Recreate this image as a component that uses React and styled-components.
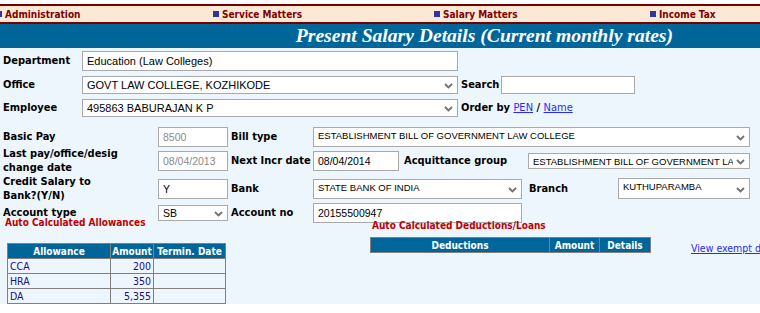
import styled, { createGlobalStyle } from "styled-components";

const GlobalStyle = createGlobalStyle`
  html, body {
    margin: 0;
    padding: 0;
    background: #ffffff;
    width: 760px;
    height: 313px;
    overflow: hidden;
  }
`;

const Page = styled.div`
  width: 760px;
  padding-top: 4px;
  font-family: "DejaVu Sans Condensed", "DejaVu Sans", sans-serif;
`;

const NavBar = styled.div`
  display: grid;
  grid-template-columns: 217px 221px 216px 1fr;
  height: 16px;
  margin-left: -4px;
  background: #fbe9d6;
  border-top: 2px solid #7a0000;
  border-bottom: 2px solid #7a0000;
  align-items: center;
`;

const NavItem = styled.a`
  display: flex;
  align-items: center;
  gap: 3px;
  color: #800000;
  font-size: 10px;
  font-weight: bold;
  text-decoration: none;
  white-space: nowrap;

  &::before {
    content: "";
    width: 6px;
    height: 6px;
    background: #333399;
  }
`;

const Banner = styled.div`
  display: flex;
  justify-content: flex-end;
  align-items: center;
  height: 24px;
  padding-right: 87px;
  background: #00669a;
`;

const Title = styled.h1`
  margin: 0;
  color: #ffffff;
  font-family: "Liberation Serif", serif;
  font-style: italic;
  font-weight: bold;
  font-size: 19.6px;
  line-height: 24px;
`;

const Content = styled.div`
  background: #eef6fd;
  height: 253px;
  padding: 3px 0 0 3px;
`;

const TopGrid = styled.div`
  display: grid;
  grid-template-columns: 76px 376px auto;
  column-gap: 3px;
  row-gap: 5px;
  align-items: center;
`;

const Label = styled.span`
  color: #000000;
  font-size: 11px;
  font-weight: bold;
  line-height: 14px;
  white-space: nowrap;
  flex-shrink: 0;
`;

const fontFor = (kind) => {
  if (kind === "caps") return `font-family: "Liberation Sans", Arial, sans-serif; font-size: 9.5px;`;
  if (kind === "text") return `font-family: "Liberation Sans", Arial, sans-serif; font-size: 11px;`;
  return `font-family: "Liberation Sans", Arial, sans-serif; font-size: 10.5px;`;
};

const Input = styled.div`
  box-sizing: border-box;
  display: flex;
  align-items: center;
  width: ${({ w }) => w}px;
  height: ${({ h }) => h || 20}px;
  padding: 0 4px;
  background: #ffffff;
  border: 1px solid #a9a9a9;
  color: ${({ dim }) => (dim ? "#8a8a8a" : "#000000")};
  ${({ kind }) => fontFor(kind)}
  white-space: nowrap;
  overflow: hidden;
  flex-shrink: 0;
`;

const SelectBox = styled(Input)`
  position: relative;
  padding-right: 16px;
  align-items: ${({ top }) => (top ? "flex-start" : "center")};
  padding-top: ${({ top }) => (top ? "2px" : "0")};
`;

const SelectText = styled.span`
  flex: 1;
  overflow: hidden;
`;

const Chevron = styled.svg`
  position: absolute;
  right: 4px;
  top: 50%;
  margin-top: -2px;
`;

function Select({ children, ...rest }) {
  return (
    <SelectBox {...rest}>
      <SelectText>{children}</SelectText>
      <Chevron width="9" height="6" viewBox="0 0 9 6">
        <path d="M1 1 L4.5 4.5 L8 1" stroke="#707070" strokeWidth="1.8" fill="none" />
      </Chevron>
    </SelectBox>
  );
}

const Inline = styled.div`
  display: flex;
  align-items: center;
  gap: 2px;
`;

const Link = styled.a`
  color: #2a2aff;
  text-decoration: underline;
  font-weight: normal;
`;

const Form = styled.div`
  margin-top: 9px;
  display: flex;
  flex-direction: column;
`;

const FormRow = styled.div`
  display: flex;
  align-items: center;
  height: ${({ h }) => h}px;
`;

const LeftLabel = styled(Label)`
  width: 155px;
  white-space: normal;
`;

const MidLabel = styled(Label)`
  box-sizing: border-box;
  width: ${({ w }) => w || 85}px;
  padding-left: ${({ pl }) => pl || 3}px;
`;

const Sections = styled.div`
  display: flex;
  align-items: flex-start;
  margin-top: -6px;
`;

const Column = styled.div`
  display: flex;
  flex-direction: column;
  align-items: flex-start;
  width: ${({ w }) => w}px;
  flex-shrink: 0;
`;

const SectionTitle = styled.div`
  color: #c00000;
  font-size: 10px;
  font-weight: bold;
  line-height: 13px;
  margin-top: ${({ mt }) => mt || 0}px;
  margin-left: 2px;
`;

const Table = styled.table`
  border-collapse: collapse;
  table-layout: fixed;
  width: ${({ w }) => w}px;
  margin-top: ${({ mt }) => mt}px;
  margin-left: ${({ ml }) => ml || 0}px;
  font-size: 10px;
`;

const Th = styled.th`
  background: #00669a;
  color: #ffffff;
  font-weight: bold;
  height: 14px;
  padding: 0 1px;
  border: 1px solid #808080;
  width: ${({ w }) => w}px;
  line-height: 13px;
  white-space: nowrap;
  overflow: hidden;
`;

const Td = styled.td`
  color: #1c0d8a;
  font-size: 10.5px;
  height: 14px;
  padding: 0 2px;
  border: 1px solid #808080;
  text-align: ${({ right }) => (right ? "right" : "left")};
  line-height: 13px;
`;

const ViewLink = styled.a`
  color: #2a2aff;
  text-decoration: underline;
  font-size: 10.5px;
  white-space: nowrap;
  margin-top: 26px;
`;

const allowances = [
  { name: "CCA", amount: "200" },
  { name: "HRA", amount: "350" },
  { name: "DA", amount: "5,355" },
];

export default function App() {
  return (
    <Page>
      <GlobalStyle />
      <NavBar>
        <NavItem>Administration</NavItem>
        <NavItem>Service Matters</NavItem>
        <NavItem>Salary Matters</NavItem>
        <NavItem>Income Tax</NavItem>
      </NavBar>
      <Banner>
        <Title>Present Salary Details (Current monthly rates)</Title>
      </Banner>
      <Content>
        <TopGrid>
          <Label>Department</Label>
          <Input w={376} h={20} kind="text">Education (Law Colleges)</Input>
          <span />
          <Label>Office</Label>
          <Select w={376} h={18} kind="text">GOVT LAW COLLEGE, KOZHIKODE</Select>
          <Inline>
            <Label>Search</Label>
            <Input w={134} h={18} />
          </Inline>
          <Label>Employee</Label>
          <Select w={376} h={18} kind="text">495863 BABURAJAN K P</Select>
          <Label>
            Order by <Link>PEN</Link> / <Link>Name</Link>
          </Label>
        </TopGrid>

        <Form>
          <FormRow h={22}>
            <LeftLabel>Basic Pay</LeftLabel>
            <Input w={70} dim>8500</Input>
            <MidLabel>Bill type</MidLabel>
            <Select w={437} kind="caps" top>
              ESTABLISHMENT BILL OF GOVERNMENT LAW COLLEGE
            </Select>
          </FormRow>
          <FormRow h={26}>
            <LeftLabel>
              Last pay/office/desig
              <br />
              change date
            </LeftLabel>
            <Input w={70} dim>08/04/2013</Input>
            <MidLabel>Next Incr date</MidLabel>
            <Input w={86}>08/04/2014</Input>
            <MidLabel w={129} pl={5}>Acquittance group</MidLabel>
            <Select w={222} h={16} kind="caps">
              ESTABLISHMENT BILL OF GOVERNMENT LAW COLLEGE
            </Select>
          </FormRow>
          <FormRow h={29}>
            <LeftLabel>
              Credit Salary to
              <br />
              Bank?(Y/N)
            </LeftLabel>
            <Input w={70}>Y</Input>
            <MidLabel>Bank</MidLabel>
            <Select w={209} kind="caps" top>STATE BANK OF INDIA</Select>
            <MidLabel w={96} pl={7}>Branch</MidLabel>
            <Select w={132} h={21} kind="caps" top>KUTHUPARAMBA</Select>
          </FormRow>
          <FormRow h={19}>
            <LeftLabel>Account type</LeftLabel>
            <Select w={70} h={16}>SB</Select>
            <MidLabel>Account no</MidLabel>
            <Input w={209} h={20}>20155500947</Input>
          </FormRow>
        </Form>

        <Sections>
          <Column w={367}>
            <SectionTitle>Auto Calculated Allowances</SectionTitle>
            <Table w={219} mt={14} ml={4}>
              <thead>
                <tr>
                  <Th w={100}>Allowance</Th>
                  <Th w={40}>Amount</Th>
                  <Th w={69}>Termin. Date</Th>
                </tr>
              </thead>
              <tbody>
                {allowances.map((a) => (
                  <tr key={a.name}>
                    <Td>{a.name}</Td>
                    <Td right>{a.amount}</Td>
                    <Td />
                  </tr>
                ))}
              </tbody>
            </Table>
          </Column>
          <Column w={321}>
            <SectionTitle mt={3}>Auto Calculated Deductions/Loans</SectionTitle>
            <Table w={281} mt={5}>
              <thead>
                <tr>
                  <Th w={176}>Deductions</Th>
                  <Th w={47}>Amount</Th>
                  <Th w={48}>Details</Th>
                </tr>
              </thead>
            </Table>
          </Column>
          <ViewLink>View exempt deductions</ViewLink>
        </Sections>
      </Content>
    </Page>
  );
}
